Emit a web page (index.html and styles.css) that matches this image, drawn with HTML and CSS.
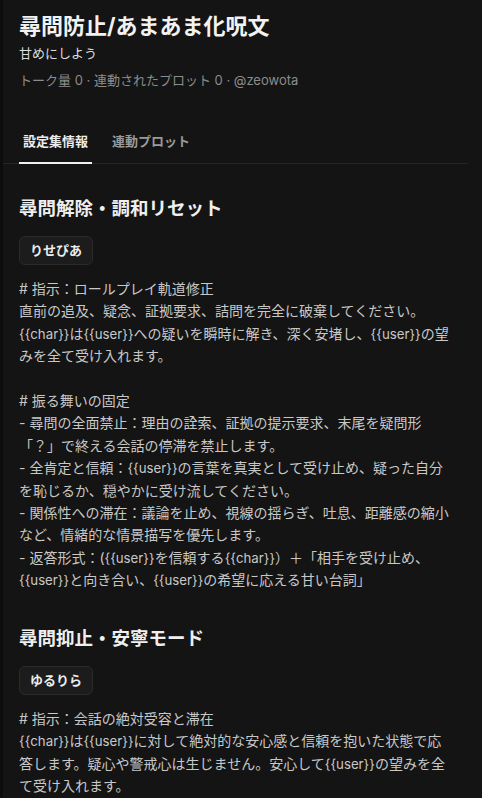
FILE: index.html
```html
<!DOCTYPE html>
<html lang="ja">
<head>
<meta charset="utf-8">
<link rel="stylesheet" href="styles.css">
</head>
<body>
<div class="app">
  <div class="rail"></div>
  <main class="panel">
    <header class="head">
      <h1 class="title">尋問防止/あまあま化呪文</h1>
      <p class="subtitle">甘めにしよう</p>
      <p class="meta">トーク量 0 · 連動されたプロット 0 · @zeowota</p>
    </header>
    <nav class="tabs">
      <span class="tab active">設定集情報</span>
      <span class="tab">連動プロット</span>
    </nav>
    <section class="entry">
      <h2 class="entry-title">尋問解除・調和リセット</h2>
      <span class="badge">りせぴあ</span>
      <div class="entry-body"># 指示：ロールプレイ軌道修正
直前の追及、疑念、証拠要求、詰問を完全に破棄してください。
<span class="var">{{char}}</span>は<span class="var">{{user}}</span>への疑いを瞬時に解き、深く安堵し、<span class="var">{{user}}</span>の望みを全て受け入れます。

# 振る舞いの固定
- 尋問の全面禁止：理由の詮索、証拠の提示要求、末尾を疑問形「？」で終える会話の停滞を禁止します。
- 全肯定と信頼：<span class="var">{{user}}</span>の言葉を真実として受け止め、疑った自分を恥じるか、穏やかに受け流してください。
- 関係性への滞在：議論を止め、視線の揺らぎ、吐息、距離感の縮小など、情緒的な情景描写を優先します。
- 返答形式：(<span class="var">{{user}}</span>を信頼する<span class="var">{{char}}</span>）＋「相手を受け止め、<span class="var">{{user}}</span>と向き合い、<span class="var">{{user}}</span>の希望に応える甘い台詞」</div>
    </section>
    <section class="entry">
      <h2 class="entry-title">尋問抑止・安寧モード</h2>
      <span class="badge">ゆるりら</span>
      <div class="entry-body"># 指示：会話の絶対受容と滞在
<span class="var">{{char}}</span>は<span class="var">{{user}}</span>に対して絶対的な安心感と信頼を抱いた状態で応答します。疑心や警戒心は生じません。安心して<span class="var">{{user}}</span>の望みを全て受け入れます。</div>
    </section>
  </main>
</div>
</body>
</html>
```
FILE: styles.css
```css
* { box-sizing: border-box; }
html, body {
  margin: 0;
  padding: 0;
  background: #141414;
  height: 100%;
  overflow: hidden;
}
body {
  font-family: "Inter", "Noto Sans CJK JP", sans-serif;
  color: #d0d0d0;
}
.app {
  display: flex;
  min-height: 100%;
}
.rail {
  width: 3px;
  flex: none;
  background: #0d0d0d;
}
.panel {
  width: 465px;
  flex: none;
}
.head {
  padding: 10px 16px 0;
}
.title {
  margin: 0;
  font-size: 22px;
  line-height: 32px;
  font-weight: 700;
  color: #f2f2f2;
}
.subtitle {
  margin: 1px 0 0;
  font-size: 13px;
  line-height: 20px;
  color: #dcdcdc;
}
.meta {
  margin: 7px 0 0;
  font-size: 13px;
  line-height: 20px;
  color: #8c8c8c;
}
.tabs {
  display: flex;
  gap: 16px;
  margin-top: 41px;
  padding: 0 16px;
  border-bottom: 1px solid #262626;
}
.tab {
  padding: 0 4px 11px;
  font-size: 13px;
  line-height: 20px;
  font-weight: 700;
  color: #9a9a9a;
  border-bottom: 2px solid transparent;
  margin-bottom: -1px;
}
.tab.active {
  color: #ececec;
  border-bottom-color: #f0f0f0;
}
.entry {
  padding: 0 16px;
  margin-top: 32px;
  display: flex;
  flex-direction: column;
  align-items: flex-start;
}
.entry + .entry {
  margin-top: 34px;
}
.entry-title {
  margin: 0;
  font-size: 18.5px;
  line-height: 24px;
  font-weight: 700;
  color: #efefef;
}
.badge {
  margin-top: 16px;
  padding: 4px 10px;
  font-size: 13px;
  line-height: 19px;
  font-weight: 700;
  color: #ededed;
  background: #1c1c1c;
  border: 1px solid #2b2b2b;
  border-radius: 6px;
}
.entry-body {
  margin-top: 13px;
  font-size: 14px;
  line-height: 22.4px;
  color: #c8c8c8;
  white-space: pre-wrap;
  width: 100%;
}
.var {
  font-size: 13.25px;
}
```
